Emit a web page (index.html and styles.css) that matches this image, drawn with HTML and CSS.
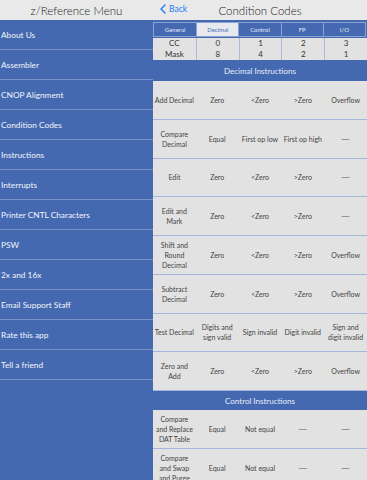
FILE: index.html
```html
<!DOCTYPE html>
<html lang="en">
<head>
    <meta charset="UTF-8">
    <meta name="viewport" content="width=device-width, initial-scale=1.0">
    <title>Condition Codes</title>
    <link rel="stylesheet" href="styles.css">
</head>
<body>
    <div class="app">
        <aside class="menu">
            <header class="bar">z/Reference Menu</header>
            <nav class="menu-list">
                <a href="#">About Us</a>
                <a href="#">Assembler</a>
                <a href="#">CNOP Alignment</a>
                <a href="#">Condition Codes</a>
                <a href="#">Instructions</a>
                <a href="#">Interrupts</a>
                <a href="#">Printer CNTL Characters</a>
                <a href="#">PSW</a>
                <a href="#">2x and 16x</a>
                <a href="#">Email Support Staff</a>
                <a href="#">Rate this app</a>
                <a href="#">Tell a friend</a>
            </nav>
        </aside>

        <main class="detail">
            <header class="bar detail-bar">
                <a class="back" href="#">
                    <svg width="6" height="10" viewBox="0 0 6 10"><path d="M5 1 L1 5 L5 9" fill="none" stroke="#1a7cf5" stroke-width="1.4" stroke-linecap="round" stroke-linejoin="round"/></svg>
                    Back
                </a>
                <span class="title">Condition Codes</span>
            </header>

            <div class="segments">
                <span>General</span>
                <span class="active">Decimal</span>
                <span>Control</span>
                <span>FP</span>
                <span>I/O</span>
            </div>

            <div class="cc-table">
                <div class="cell"><div>CC</div><div>Mask</div></div>
                <div class="cell"><div>0</div><div>8</div></div>
                <div class="cell"><div>1</div><div>4</div></div>
                <div class="cell"><div>2</div><div>2</div></div>
                <div class="cell"><div>3</div><div>1</div></div>
            </div>

            <div class="section">Decimal Instructions</div>
            <div class="row"><span>Add Decimal</span><span>Zero</span><span>&lt;Zero</span><span>&gt;Zero</span><span>Overflow</span></div>
            <div class="row"><span>Compare<br>Decimal</span><span>Equal</span><span>First op low</span><span>First op high</span><span class="dash">—</span></div>
            <div class="row"><span>Edit</span><span>Zero</span><span>&lt;Zero</span><span>&gt;Zero</span><span class="dash">—</span></div>
            <div class="row"><span>Edit and<br>Mark</span><span>Zero</span><span>&lt;Zero</span><span>&gt;Zero</span><span class="dash">—</span></div>
            <div class="row"><span>Shift and<br>Round<br>Decimal</span><span>Zero</span><span>&lt;Zero</span><span>&gt;Zero</span><span>Overflow</span></div>
            <div class="row"><span>Subtract<br>Decimal</span><span>Zero</span><span>&lt;Zero</span><span>&gt;Zero</span><span>Overflow</span></div>
            <div class="row"><span>Test Decimal</span><span>Digits and<br>sign valid</span><span>Sign invalid</span><span>Digit invalid</span><span>Sign and<br>digit invalid</span></div>
            <div class="row"><span>Zero and<br>Add</span><span>Zero</span><span>&lt;Zero</span><span>&gt;Zero</span><span>Overflow</span></div>

            <div class="section small">Control Instructions</div>
            <div class="row"><span>Compare<br>and Replace<br>DAT Table</span><span>Equal</span><span>Not equal</span><span class="dash">—</span><span class="dash">—</span></div>
            <div class="row"><span>Compare<br>and Swap<br>and Purge</span><span>Equal</span><span>Not equal</span><span class="dash">—</span><span class="dash">—</span></div>
        </main>
    </div>
</body>
</html>
```

FILE: styles.css
```css
body {
    margin: 0;
    font-family: Lato, "Open Sans", sans-serif;
    background-color: #4569b0;
    color: #333;
    overflow: hidden;
}

.app {
    display: flex;
    width: 367px;
    height: 480px;
    overflow: hidden;
}

.bar {
    height: 20px;
    background-color: #e9e9e9;
    color: #222;
    font-size: 11.5px;
    font-weight: 300;
    display: flex;
    align-items: center;
    justify-content: center;
}

.menu {
    width: 153px;
    flex-shrink: 0;
    background-color: #4569b0;
}

.menu-list a {
    display: flex;
    align-items: center;
    height: 29px;
    border-bottom: 1px solid #7893c8;
    color: #f2f5fb;
    text-decoration: none;
    font-size: 8.3px;
    padding-left: 1px;
}

.detail {
    flex: 1;
    background-color: #4569b0;
}

.detail-bar {
    position: relative;
}

.back {
    position: absolute;
    left: 7px;
    top: 4px;
    display: flex;
    align-items: center;
    gap: 3px;
    color: #1a7cf5;
    text-decoration: none;
    font-size: 8.5px;
    font-weight: 400;
}

.title {
    font-size: 11.5px;
}

.segments {
    display: grid;
    grid-template-columns: repeat(5, 1fr);
    margin: 2px 1px 1px 0;
    height: 13px;
    border: 1px solid #8ba3d4;
}

.segments span {
    display: flex;
    align-items: center;
    justify-content: center;
    font-size: 6px;
    color: #e4eaf6;
    border-left: 1px solid #8ba3d4;
}

.segments span:first-child {
    border-left: none;
}

.segments .active {
    background-color: #e8e9ee;
    color: #4a6fb5;
}

.cc-table {
    display: grid;
    grid-template-columns: repeat(5, 1fr);
    height: 22px;
    background-color: #e2e2e2;
    margin-bottom: 1px;
}

.cc-table .cell {
    display: flex;
    flex-direction: column;
    align-items: center;
    justify-content: center;
    font-size: 8px;
    line-height: 11px;
    color: #333;
    border-left: 1px solid #a9bbdd;
}

.cc-table .cell:first-child {
    border-left: none;
}

.section {
    height: 20px;
    display: flex;
    align-items: center;
    justify-content: center;
    color: #e8eef8;
    font-size: 8px;
}

.section.small {
    height: 19px;
}

.row {
    display: grid;
    grid-template-columns: repeat(5, 1fr);
    height: 38.75px;
    box-sizing: border-box;
    background-color: #e2e2e2;
    border-bottom: 1px solid #a3b6dc;
}

.row span {
    display: flex;
    align-items: center;
    justify-content: center;
    text-align: center;
    font-size: 7px;
    line-height: 10px;
    color: #444;
}

.row .dash {
    font-family: "Liberation Sans", sans-serif;
    font-size: 8px;
    color: #555;
}
```
